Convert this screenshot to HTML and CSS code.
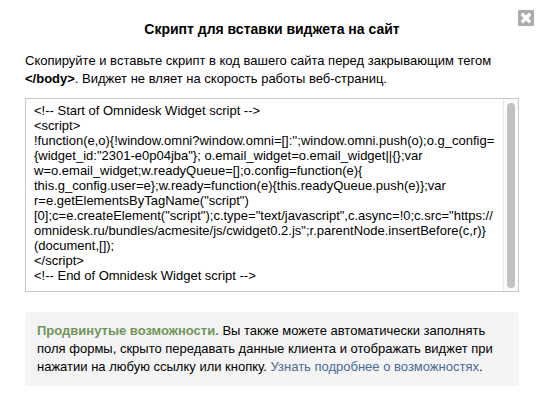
FILE: index.html
```html
<!DOCTYPE html>
<html lang="ru">
<head>
<meta charset="utf-8">
<title>Скрипт для вставки виджета на сайт</title>
<link rel="stylesheet" href="styles.css">
</head>
<body>
<div class="modal">
  <button class="close" type="button" aria-label="Закрыть">
    <svg viewBox="0 0 16 16" width="16" height="16"><path d="M5 5l6 6M11 5l-6 6" stroke="#fff" stroke-width="3.4" stroke-linecap="square" fill="none"/></svg>
  </button>
  <h1 class="title">Скрипт для вставки виджета на сайт</h1>
  <p class="intro">Скопируйте и вставьте скрипт в код вашего сайта перед закрывающим тегом <b>&lt;/body&gt;</b>. Виджет не вляет на скорость работы веб-страниц.</p>
  <div class="code-box">
    <pre class="code">&lt;!-- Start of Omnidesk Widget script --&gt;
&lt;script&gt;
!function(e,o){!window.omni?window.omni=[]:'';window.omni.push(o);o.g_config=
{widget_id:"2301-e0p04jba"}; o.email_widget=o.email_widget||{};var
w=o.email_widget;w.readyQueue=[];o.config=function(e){
this.g_config.user=e};w.ready=function(e){this.readyQueue.push(e)};var
r=e.getElementsByTagName("script")
[0];c=e.createElement("script");c.type="text/javascript",c.async=!0;c.src="https://
omnidesk.ru/bundles/acmesite/js/cwidget0.2.js";r.parentNode.insertBefore(c,r)}
(document,[]);
&lt;/script&gt;
&lt;!-- End of Omnidesk Widget script --&gt;</pre>
    <div class="scroll-track"><div class="scroll-thumb"></div></div>
  </div>
  <div class="note"><strong class="note-head">Продвинутые возможности.</strong> Вы также можете автоматически заполнять поля формы, скрыто передавать данные клиента и отображать виджет при нажатии на любую ссылку или кнопку. <a class="note-link" href="#">Узнать подробнее о возможностях</a>.</div>
</div>
</body>
</html>
```
FILE: styles.css
```css
html, body { margin: 0; height: 100%; background: #fff; }
body { font-family: "Liberation Sans", Arial, sans-serif; color: #000; }
.modal {
  position: relative;
  box-sizing: border-box;
  width: 544px;
  height: 410px;
  background: #fff;
  padding: 20px 25px 0;
}
.close {
  position: absolute;
  top: 10px;
  right: 10px;
  width: 16px;
  height: 16px;
  padding: 0;
  border: 0;
  border-radius: 1px;
  background: #acacac;
  display: flex;
}
.title {
  margin: 0;
  font-size: 14px;
  line-height: 18px;
  font-weight: bold;
  text-align: center;
}
.intro {
  margin: 14px 0 0;
  font-size: 13px;
  line-height: 18px;
}
.code-box {
  position: relative;
  box-sizing: border-box;
  height: 194px;
  margin-top: 10px;
  border: 1px solid #c8c8c8;
  overflow: hidden;
}
.code {
  margin: 0;
  padding: 4px 24px 0 8px;
  font-family: "Liberation Sans", Arial, sans-serif;
  font-size: 13px;
  line-height: 15px;
  white-space: pre;
}
.scroll-track {
  position: absolute;
  top: 0;
  right: 0;
  bottom: 0;
  box-sizing: border-box;
  width: 15px;
  padding: 4px 3px 3px 3px;
  background: #fafafa;
  border-left: 1px solid #e8e8e8;
}
.scroll-thumb {
  width: 8px;
  height: 100%;
  border-radius: 4px;
  background: #c1c1c1;
}
.note {
  box-sizing: border-box;
  height: 74px;
  margin-top: 20px;
  padding: 10px 12px;
  background: #f4f4f4;
  border-radius: 2px;
  font-size: 13px;
  line-height: 18px;
}
.note-head { color: #6f9658; }
.note-link { color: #4a6a9c; text-decoration: none; }
```
